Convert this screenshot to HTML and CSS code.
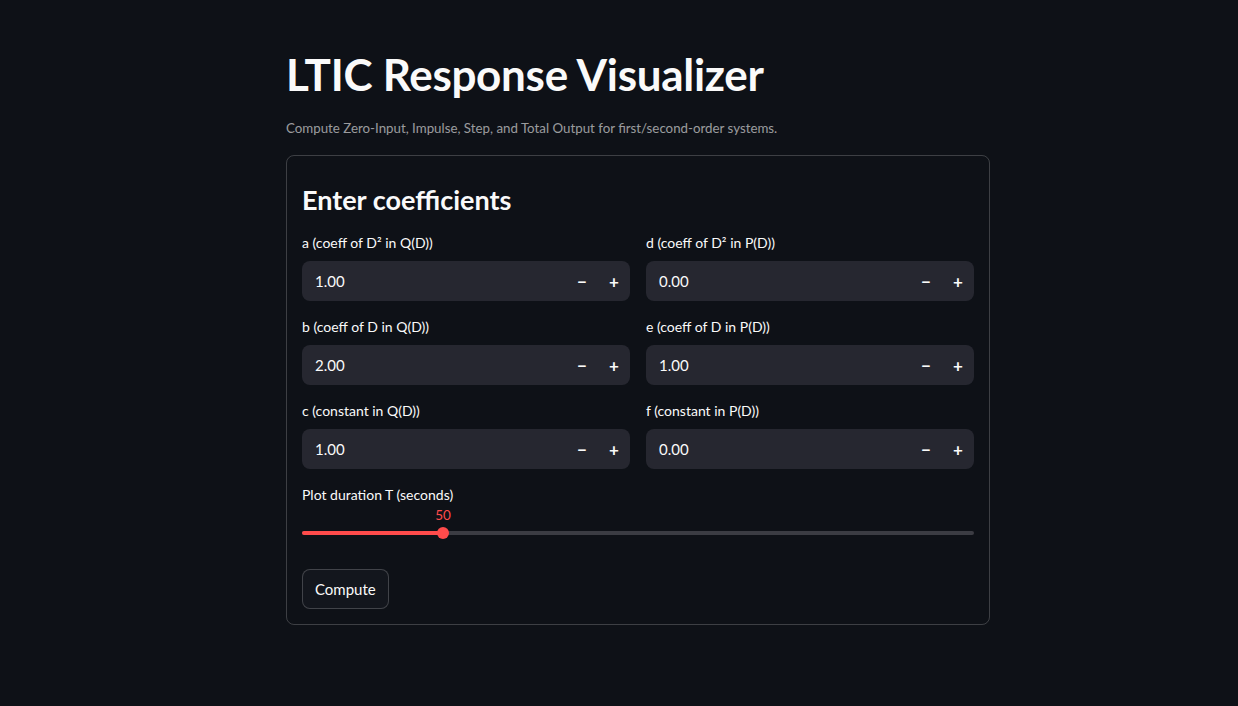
FILE: index.html
```html
<!DOCTYPE html>
<html lang="en">
<head>
<meta charset="utf-8">
<title>LTIC Response Visualizer</title>
<link rel="stylesheet" href="styles.css">
</head>
<body>
<main class="page">
  <h1 class="title">LTIC Response Visualizer</h1>
  <p class="caption">Compute Zero-Input, Impulse, Step, and Total Output for first/second-order systems.</p>
  <form class="card">
    <h3 class="card-title">Enter coefficients</h3>
    <div class="grid">
      <div class="field">
        <label class="label">a (coeff of D² in Q(D))</label>
        <div class="num"><span class="num-value">1.00</span><span class="step">−</span><span class="step">+</span></div>
      </div>
      <div class="field">
        <label class="label">d (coeff of D² in P(D))</label>
        <div class="num"><span class="num-value">0.00</span><span class="step">−</span><span class="step">+</span></div>
      </div>
      <div class="field">
        <label class="label">b (coeff of D in Q(D))</label>
        <div class="num"><span class="num-value">2.00</span><span class="step">−</span><span class="step">+</span></div>
      </div>
      <div class="field">
        <label class="label">e (coeff of D in P(D))</label>
        <div class="num"><span class="num-value">1.00</span><span class="step">−</span><span class="step">+</span></div>
      </div>
      <div class="field">
        <label class="label">c (constant in Q(D))</label>
        <div class="num"><span class="num-value">1.00</span><span class="step">−</span><span class="step">+</span></div>
      </div>
      <div class="field">
        <label class="label">f (constant in P(D))</label>
        <div class="num"><span class="num-value">0.00</span><span class="step">−</span><span class="step">+</span></div>
      </div>
    </div>
    <div class="slider-field">
      <label class="label">Plot duration T (seconds)</label>
      <div class="slider">
        <div class="track">
          <div class="fill" style="width:21%">
            <span class="thumb"><span class="thumb-value">50</span></span>
          </div>
        </div>
      </div>
    </div>
    <div class="actions">
      <button type="button" class="btn">Compute</button>
    </div>
  </form>
</main>
</body>
</html>
```

FILE: styles.css
```css
* { box-sizing: border-box; }
html, body {
  margin: 0;
  background: #0e1117;
  color: #fafafa;
  font-family: Lato, "Noto Sans", sans-serif;
}
.page {
  width: 704px;
  margin: 0 0 0 calc(50% - 333px);
  padding-top: 46px;
}
.title {
  margin: 0;
  font-size: 44px;
  font-weight: 700;
  line-height: 56px;
  letter-spacing: -0.3px;
}
.caption {
  margin: 16px 0 0;
  font-size: 13.3px;
  line-height: 20px;
  color: rgba(250,250,250,0.6);
}
.card {
  margin-top: 17px;
  border: 1px solid rgba(250,250,250,0.2);
  border-radius: 8px;
  padding: 16px 15px 15px;
}
.card-title {
  margin: 11px 0 0;
  font-size: 27px;
  font-weight: 700;
  line-height: 34px;
}
.grid {
  margin-top: 16px;
  display: grid;
  grid-template-columns: 1fr 1fr;
  column-gap: 16px;
  row-gap: 16px;
}
.field { display: flex; flex-direction: column; }
.label {
  display: block;
  font-size: 14px;
  line-height: 20px;
  margin-bottom: 8px;
  color: #fafafa;
}
.num {
  height: 40px;
  background: #262730;
  border-radius: 8px;
  display: flex;
  align-items: center;
  padding-left: 13px;
}
.num-value {
  flex: 1;
  font-size: 15px;
}
.step {
  width: 32px;
  text-align: center;
  font-size: 17px;
  font-weight: 700;
}
.slider-field { margin-top: 16px; }
.slider {
  padding-top: 18px;
  height: 40px;
}
.track {
  height: 4px;
  border-radius: 2px;
  background: #3b3c43;
}
.fill {
  position: relative;
  height: 4px;
  border-radius: 2px;
  background: #ff4b4b;
}
.thumb {
  position: absolute;
  right: -6px;
  top: -4px;
  width: 12px;
  height: 12px;
  border-radius: 50%;
  background: #ff4b4b;
}
.thumb-value {
  position: absolute;
  bottom: 15px;
  left: 50%;
  transform: translateX(-50%);
  font-size: 13.5px;
  line-height: 18px;
  color: #ff4b4b;
}
.actions { margin-top: 16px; }
.btn {
  height: 40px;
  padding: 0 12px;
  background: #13161d;
  color: #fafafa;
  border: 1px solid rgba(250,250,250,0.2);
  border-radius: 8px;
  font-family: inherit;
  font-size: 15px;
}
```
